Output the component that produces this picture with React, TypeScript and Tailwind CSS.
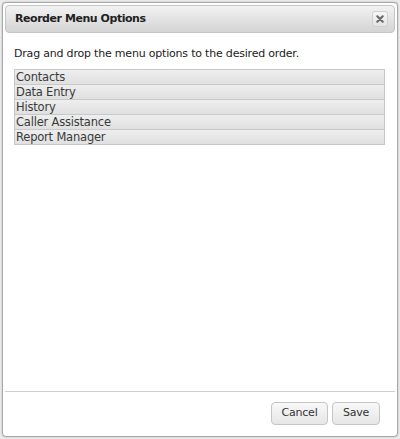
import { useState } from "react";

const initialItems = ["Contacts", "Data Entry", "History", "Caller Assistance", "Report Manager"];

export default function App() {
  const [items] = useState(initialItems);

  return (
    <div className="h-[439px] w-[400px] bg-[#ececec] p-[2px] font-['DejaVu_Sans',sans-serif] tracking-[-0.2px]">
      <div className="flex h-full flex-col rounded-[4px] border border-[#a8a8a8] bg-white p-[2px] shadow-[0_0_2px_rgba(0,0,0,0.25)]">
        {/* title bar */}
        <div className="flex h-[28px] items-center justify-between rounded-[4px] border border-[#c4c4c4] bg-gradient-to-b from-[#f2f2f2] to-[#d4d4d4] pl-[9px] pr-[6px]">
          <span className="text-[11px] font-bold tracking-[-0.45px] text-[#222]">Reorder Menu Options</span>
          <button className="flex h-[16px] w-[16px] items-center justify-center rounded-[3px] border border-[#d0d0d0] bg-gradient-to-b from-[#f6f6f6] to-[#e4e4e4]">
            <svg width="8" height="8" viewBox="0 0 8 8">
              <path d="M1.3 1.3 L6.7 6.7 M6.7 1.3 L1.3 6.7" stroke="#666" strokeWidth="2.1" strokeLinecap="round" />
            </svg>
          </button>
        </div>

        {/* body */}
        <div className="flex-1 px-[9px] pt-[14px]">
          <p className="text-[11px] leading-[14px] text-[#222]">Drag and drop the menu options to the desired order.</p>
          <ul className="mt-[8px] mr-[1px] flex flex-col">
            {items.map((item) => (
              <li
                key={item}
                className="h-[16px] border border-[#c8c8c8] bg-gradient-to-b from-[#eeeeee] to-[#e0e0e0] pl-[1px] text-[11.5px] leading-[14px] text-[#3a3a3a] [&+&]:-mt-px"
              >
                {item}
              </li>
            ))}
          </ul>
        </div>

        {/* footer */}
        <div className="flex h-[43px] items-center justify-end gap-[4px] border-t border-[#cfcfcf] pr-[15px]">
          <button className="h-[23px] w-[57px] rounded-[4px] border border-[#c6c6c6] bg-gradient-to-b from-[#f8f8f8] to-[#e6e6e6] text-[11px] text-[#333]">
            Cancel
          </button>
          <button className="h-[23px] w-[48px] rounded-[4px] border border-[#c6c6c6] bg-gradient-to-b from-[#f8f8f8] to-[#e6e6e6] text-[11px] text-[#333]">
            Save
          </button>
        </div>
      </div>
    </div>
  );
}
